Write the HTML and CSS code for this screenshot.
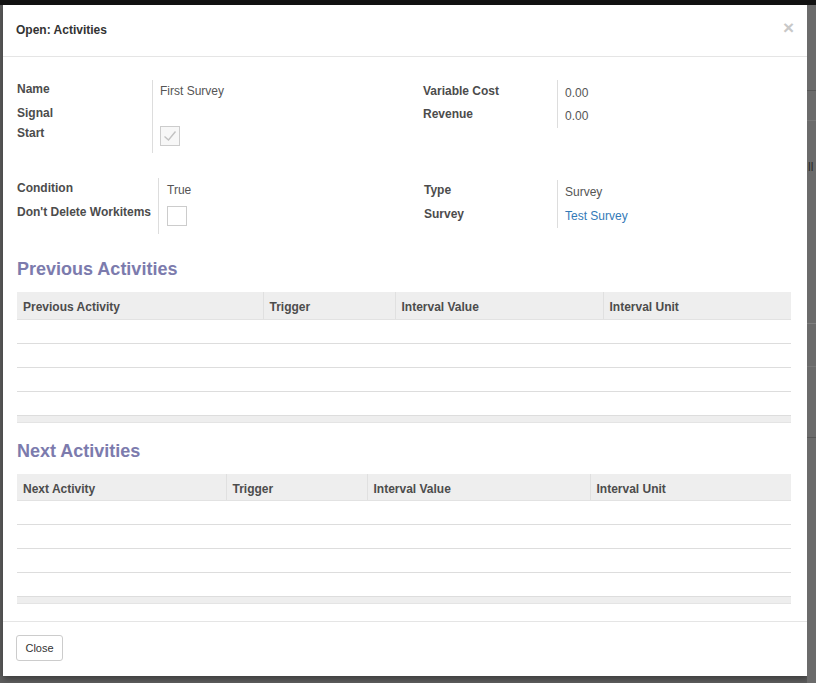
FILE: index.html
```html
<!DOCTYPE html>
<html>
<head>
<meta charset="utf-8">
<title>Open: Activities</title>
<link rel="stylesheet" href="styles.css">
</head>
<body>
<div class="screen">
  <div class="topbar"></div>
  <div class="stage">
    <div class="left-edge"></div>
    <div class="modal">
      <div class="modal-header">
        <h4 class="modal-title">Open: Activities</h4>
        <span class="modal-close">×</span>
      </div>
      <div class="modal-body">
        <div class="group-row row-a">
          <div class="group group-left">
            <div class="grid grid-a-left">
              <div class="lbl p0">Name</div>
              <div class="val p2 h24">First Survey</div>
              <div class="lbl p0">Signal</div>
              <div class="val h18"></div>
              <div class="lbl p2">Start</div>
              <div class="val h31"><span class="checkbox checked"><svg width="18" height="18" viewBox="0 0 18 18"><polyline points="3.5,9.5 7.5,13 14.5,4.5" fill="none" stroke="#c2c2c2" stroke-width="1.4"/></svg></span></div>
            </div>
          </div>
          <div class="group group-right">
            <div class="grid grid-a-right">
              <div class="lbl p2">Variable Cost</div>
              <div class="val p4 h24">0.00</div>
              <div class="lbl p1">Revenue</div>
              <div class="val p3 h24">0.00</div>
            </div>
          </div>
        </div>
        <div class="group-row row-b">
          <div class="group group-left">
            <div class="grid grid-b-left">
              <div class="lbl p1">Condition</div>
              <div class="val p3 h22 wide">True</div>
              <div class="lbl p3">Don't Delete Workitems</div>
              <div class="val h34 wide"><span class="checkbox cb-b"></span></div>
            </div>
          </div>
          <div class="group group-right shift">
            <div class="grid grid-b-right">
              <div class="lbl p1">Type</div>
              <div class="val p3 h24">Survey</div>
              <div class="lbl p1">Survey</div>
              <div class="val p3 h24"><a class="link">Test Survey</a></div>
            </div>
          </div>
        </div>

        <h3 class="section-title first">Previous Activities</h3>
        <table class="list">
          <colgroup><col style="width:246px"><col style="width:132px"><col style="width:208px"><col></colgroup>
          <thead><tr><th>Previous Activity</th><th>Trigger</th><th>Interval Value</th><th>Interval Unit</th></tr></thead>
          <tbody>
            <tr><td></td><td></td><td></td><td></td></tr>
            <tr><td></td><td></td><td></td><td></td></tr>
            <tr><td></td><td></td><td></td><td></td></tr>
            <tr><td></td><td></td><td></td><td></td></tr>
          </tbody>
          <tfoot><tr><td colspan="4"></td></tr></tfoot>
        </table>

        <h3 class="section-title second">Next Activities</h3>
        <table class="list">
          <colgroup><col style="width:209px"><col style="width:141px"><col style="width:223px"><col></colgroup>
          <thead><tr><th>Next Activity</th><th>Trigger</th><th>Interval Value</th><th>Interval Unit</th></tr></thead>
          <tbody>
            <tr><td></td><td></td><td></td><td></td></tr>
            <tr><td></td><td></td><td></td><td></td></tr>
            <tr><td></td><td></td><td></td><td></td></tr>
            <tr><td></td><td></td><td></td><td></td></tr>
          </tbody>
          <tfoot><tr><td colspan="4"></td></tr></tfoot>
        </table>
      </div>
      <div class="modal-footer">
        <button class="btn">Close</button>
      </div>
    </div>
    <div class="right-edge">
      <div class="bg-line l1"></div>
      <div class="bg-line l2"></div>
      <div class="bg-text">ll</div>
      <div class="bg-line l3"></div>
      <div class="bg-line l4"></div>
      <div class="bg-line l5"></div>
    </div>
  </div>
</div>
</body>
</html>
```

FILE: styles.css
```css
* { box-sizing: border-box; }
html, body { margin: 0; padding: 0; }
body {
  width: 816px;
  height: 683px;
  overflow: hidden;
  background: #5d5d5d;
  font-family: "Liberation Sans", Arial, sans-serif;
  font-size: 12px;
  color: #4c4c4c;
}
.screen { display: flex; flex-direction: column; height: 683px; }
.topbar { height: 5px; background: #121212; flex: none; }
.stage { display: flex; flex: 1; align-items: flex-start; background: #5d5d5d; }
.left-edge { width: 3px; height: 671px; background: #585858; flex: none; }
.right-edge {
  flex: 1;
  height: 678px;
  background: #6b6b6b;
  display: flex;
  flex-direction: column;
}
.bg-line { height: 1px; background: #575757; }
.l1 { margin-top: 85px; }
.l2 { margin-top: 29px; background: #777; }
.bg-text { margin-top: 40px; color: #2a2a2a; font-size: 12px; line-height: 12px; padding-left: 1px; }
.l3 { margin-top: 150px; background: #808080; }
.l4 { margin-top: 42px; background: #777; }
.l5 { margin-top: 70px; background: #575757; }

.modal {
  width: 804px;
  height: 671px;
  background: #fff;
  flex: none;
  display: flex;
  flex-direction: column;
  box-shadow: 1px 3px 6px rgba(0,0,0,0.35);
}
.modal-header {
  display: flex;
  justify-content: space-between;
  align-items: flex-start;
  padding: 15px 13px 16px 13px;
  border-bottom: 1px solid #e5e5e5;
}
.modal-title {
  margin: 0;
  font-size: 12px;
  line-height: 20px;
  font-weight: bold;
  color: #333;
}
.modal-close {
  font-size: 19px;
  line-height: 15px;
  font-weight: bold;
  color: #c8c8c8;
  margin-top: 0;
}
.modal-body {
  flex: 1;
  padding: 23px 16px 0 14px;
}
.group-row { display: flex; }
.row-b { margin-top: 25px; }
.group-left { width: 387px; }
.group-right { flex: 1; padding-left: 19px; }
.group-right.shift { margin-top: 2px; padding-left: 20px; }

.grid { display: grid; }
.grid-a-left { grid-template-columns: 135px 1fr; }
.grid-a-right { grid-template-columns: 134px 1fr; }
.grid-b-left { grid-template-columns: 141px 1fr; }
.grid-b-right { grid-template-columns: 133px 1fr; }

.lbl {
  font-weight: bold;
  line-height: 18px;
  color: #4c4c4c;
  white-space: nowrap;
}
.val {
  border-left: 1px solid #ddd;
  padding-left: 7px;
  line-height: 18px;
  color: #555;
}
.val.wide { padding-left: 8px; }
.p0 { padding-top: 0; }
.p1 { padding-top: 1px; }
.p2 { padding-top: 2px; }
.p3 { padding-top: 3px; }
.p4 { padding-top: 4px; }
.h18 { height: 18px; }
.h22 { height: 22px; }
.h24 { height: 24px; }
.h31 { height: 31px; padding-top: 4px; }
.h34 { height: 34px; padding-top: 6px; }

.checkbox {
  display: block;
  width: 20px;
  height: 20px;
  border: 1px solid #ccc;
  background: #fff;
}
.checkbox.checked { background: #f7f7f7; }
.checkbox svg { display: block; }
.link { color: #337ab7; text-decoration: none; }

.section-title {
  margin: 0;
  font-size: 18px;
  line-height: 22px;
  font-weight: bold;
  color: #7c7bad;
}
.section-title.first { margin-top: 24px; margin-bottom: 12px; }
.section-title.second { margin-top: 17px; margin-bottom: 12px; }

.list {
  width: 774px;
  border-collapse: collapse;
  table-layout: fixed;
}
.list th {
  height: 27px;
  background: #eee;
  border-bottom: 1px solid #e2e2e2;
  text-align: left;
  font-weight: bold;
  color: #4c4c4c;
  padding: 4px 6px 0 6px;
  line-height: 16px;
}
.list th + th { border-left: 1px solid #e0e0e0; }
.list tbody td {
  height: 24px;
  border-bottom: 1px solid #ddd;
  padding: 0;
}
.list tfoot td {
  height: 7px;
  background: #eee;
  border-bottom: 1px solid #e4e4e4;
  padding: 0;
}

.modal-footer {
  border-top: 1px solid #e5e5e5;
  padding: 13px 13px 15px 13px;
}
.btn {
  display: block;
  width: 47px;
  height: 26px;
  border: 1px solid #ccc;
  border-radius: 3px;
  background: #fff;
  font-family: "Liberation Sans", Arial, sans-serif;
  font-size: 11px;
  color: #333;
  padding: 0;
}
```
